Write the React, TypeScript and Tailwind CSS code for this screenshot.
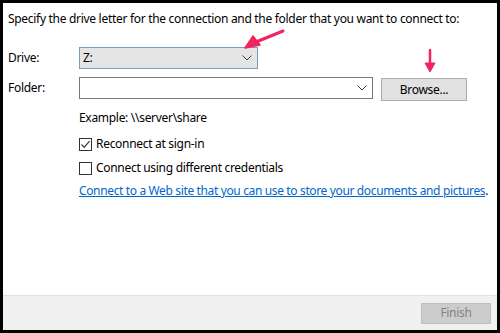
import React from "react";

const Chevron = () => (
  <svg width="10" height="6" viewBox="0 0 10 6" className="shrink-0">
    <path d="M0.5 0.5 L5 5 L9.5 0.5" fill="none" stroke="#404040" strokeWidth="1" />
  </svg>
);

const CheckBox = ({ checked }: { checked?: boolean }) => (
  <span className="flex h-[13px] w-[13px] shrink-0 items-center justify-center border border-[#333333] bg-white">
    {checked && (
      <svg width="11" height="11" viewBox="0 0 11 11">
        <path d="M1.5 5.5 L4.2 8.3 L9.5 2.2" fill="none" stroke="#333333" strokeWidth="1.2" />
      </svg>
    )}
  </span>
);

export default function App() {
  return (
    <div
      className="relative flex h-[333px] w-[500px] flex-col border-[3px] border-black bg-white text-[12px] tracking-[-0.3px] text-black"
      style={{ fontFamily: '"Noto Sans", "Segoe UI", sans-serif' }}
    >
      {/* Main content */}
      <div className="flex flex-1 flex-col px-[5px]">
        <p className="mt-[8px] whitespace-nowrap leading-[16px]">
          Specify the drive letter for the connection and the folder that you want to connect to:
        </p>

        {/* Drive */}
        <div className="mt-[20px] flex items-center">
          <span className="w-[71px]">Drive:</span>
          <div className="flex h-[22px] w-[179px] items-center justify-between border border-[#7a9cc2] bg-[#e5e5e5] pl-[3px] pr-[5px]">
            <span>Z:</span>
            <Chevron />
          </div>
        </div>

        {/* Folder */}
        <div className="mt-[8px] flex items-start">
          <span className="w-[71px] leading-[22px]">Folder:</span>
          <div className="flex h-[22px] w-[294px] items-center justify-end border border-[#7a7a7a] bg-white pr-[5px]">
            <Chevron />
          </div>
          <button className="ml-[8px] mt-px h-[23px] w-[86px] border border-[#adadad] bg-[#e1e1e1] leading-[20px]">
            Browse...
          </button>
        </div>

        <div className="ml-[71px] flex flex-col">
          <p className="mt-[9px] leading-[16px]">Example: \\server\share</p>

          <label className="mt-[10px] flex items-center gap-[4px] leading-[16px]">
            <CheckBox checked />
            <span>Reconnect at sign-in</span>
          </label>

          <label className="mt-[8px] flex items-center gap-[4px] leading-[16px]">
            <CheckBox />
            <span>Connect using different credentials</span>
          </label>

          <p className="mt-[7px] whitespace-nowrap leading-[16px] tracking-[-0.36px]">
            <a className="text-[#0066cc] underline">
              Connect to a Web site that you can use to store your documents and pictures
            </a>
            .
          </p>
        </div>
      </div>

      {/* Footer */}
      <div className="flex h-[35px] items-center justify-end border-t border-[#dfdfdf] bg-[#f0f0f0] pr-[6px]">
        <button className="h-[21px] w-[70px] border border-[#bfbfbf] bg-[#cccccc] text-[#838383]">
          Finish
        </button>
      </div>

      {/* Annotation arrows */}
      <svg className="pointer-events-none absolute left-[-3px] top-[-3px]" width="500" height="333">
        <line x1="283" y1="31" x2="256" y2="42" stroke="#f0245f" strokeWidth="3" strokeLinecap="round" />
        <path d="M245 48 L253 36 L260 45 Z" fill="#f0245f" stroke="#f0245f" strokeWidth="1.5" strokeLinejoin="round" />
        <line x1="430" y1="50" x2="430" y2="64" stroke="#f0245f" strokeWidth="2.5" strokeLinecap="round" />
        <path d="M425 63 L435 63 L430 72 Z" fill="#f0245f" stroke="#f0245f" strokeWidth="1" strokeLinejoin="round" />
      </svg>
    </div>
  );
}
